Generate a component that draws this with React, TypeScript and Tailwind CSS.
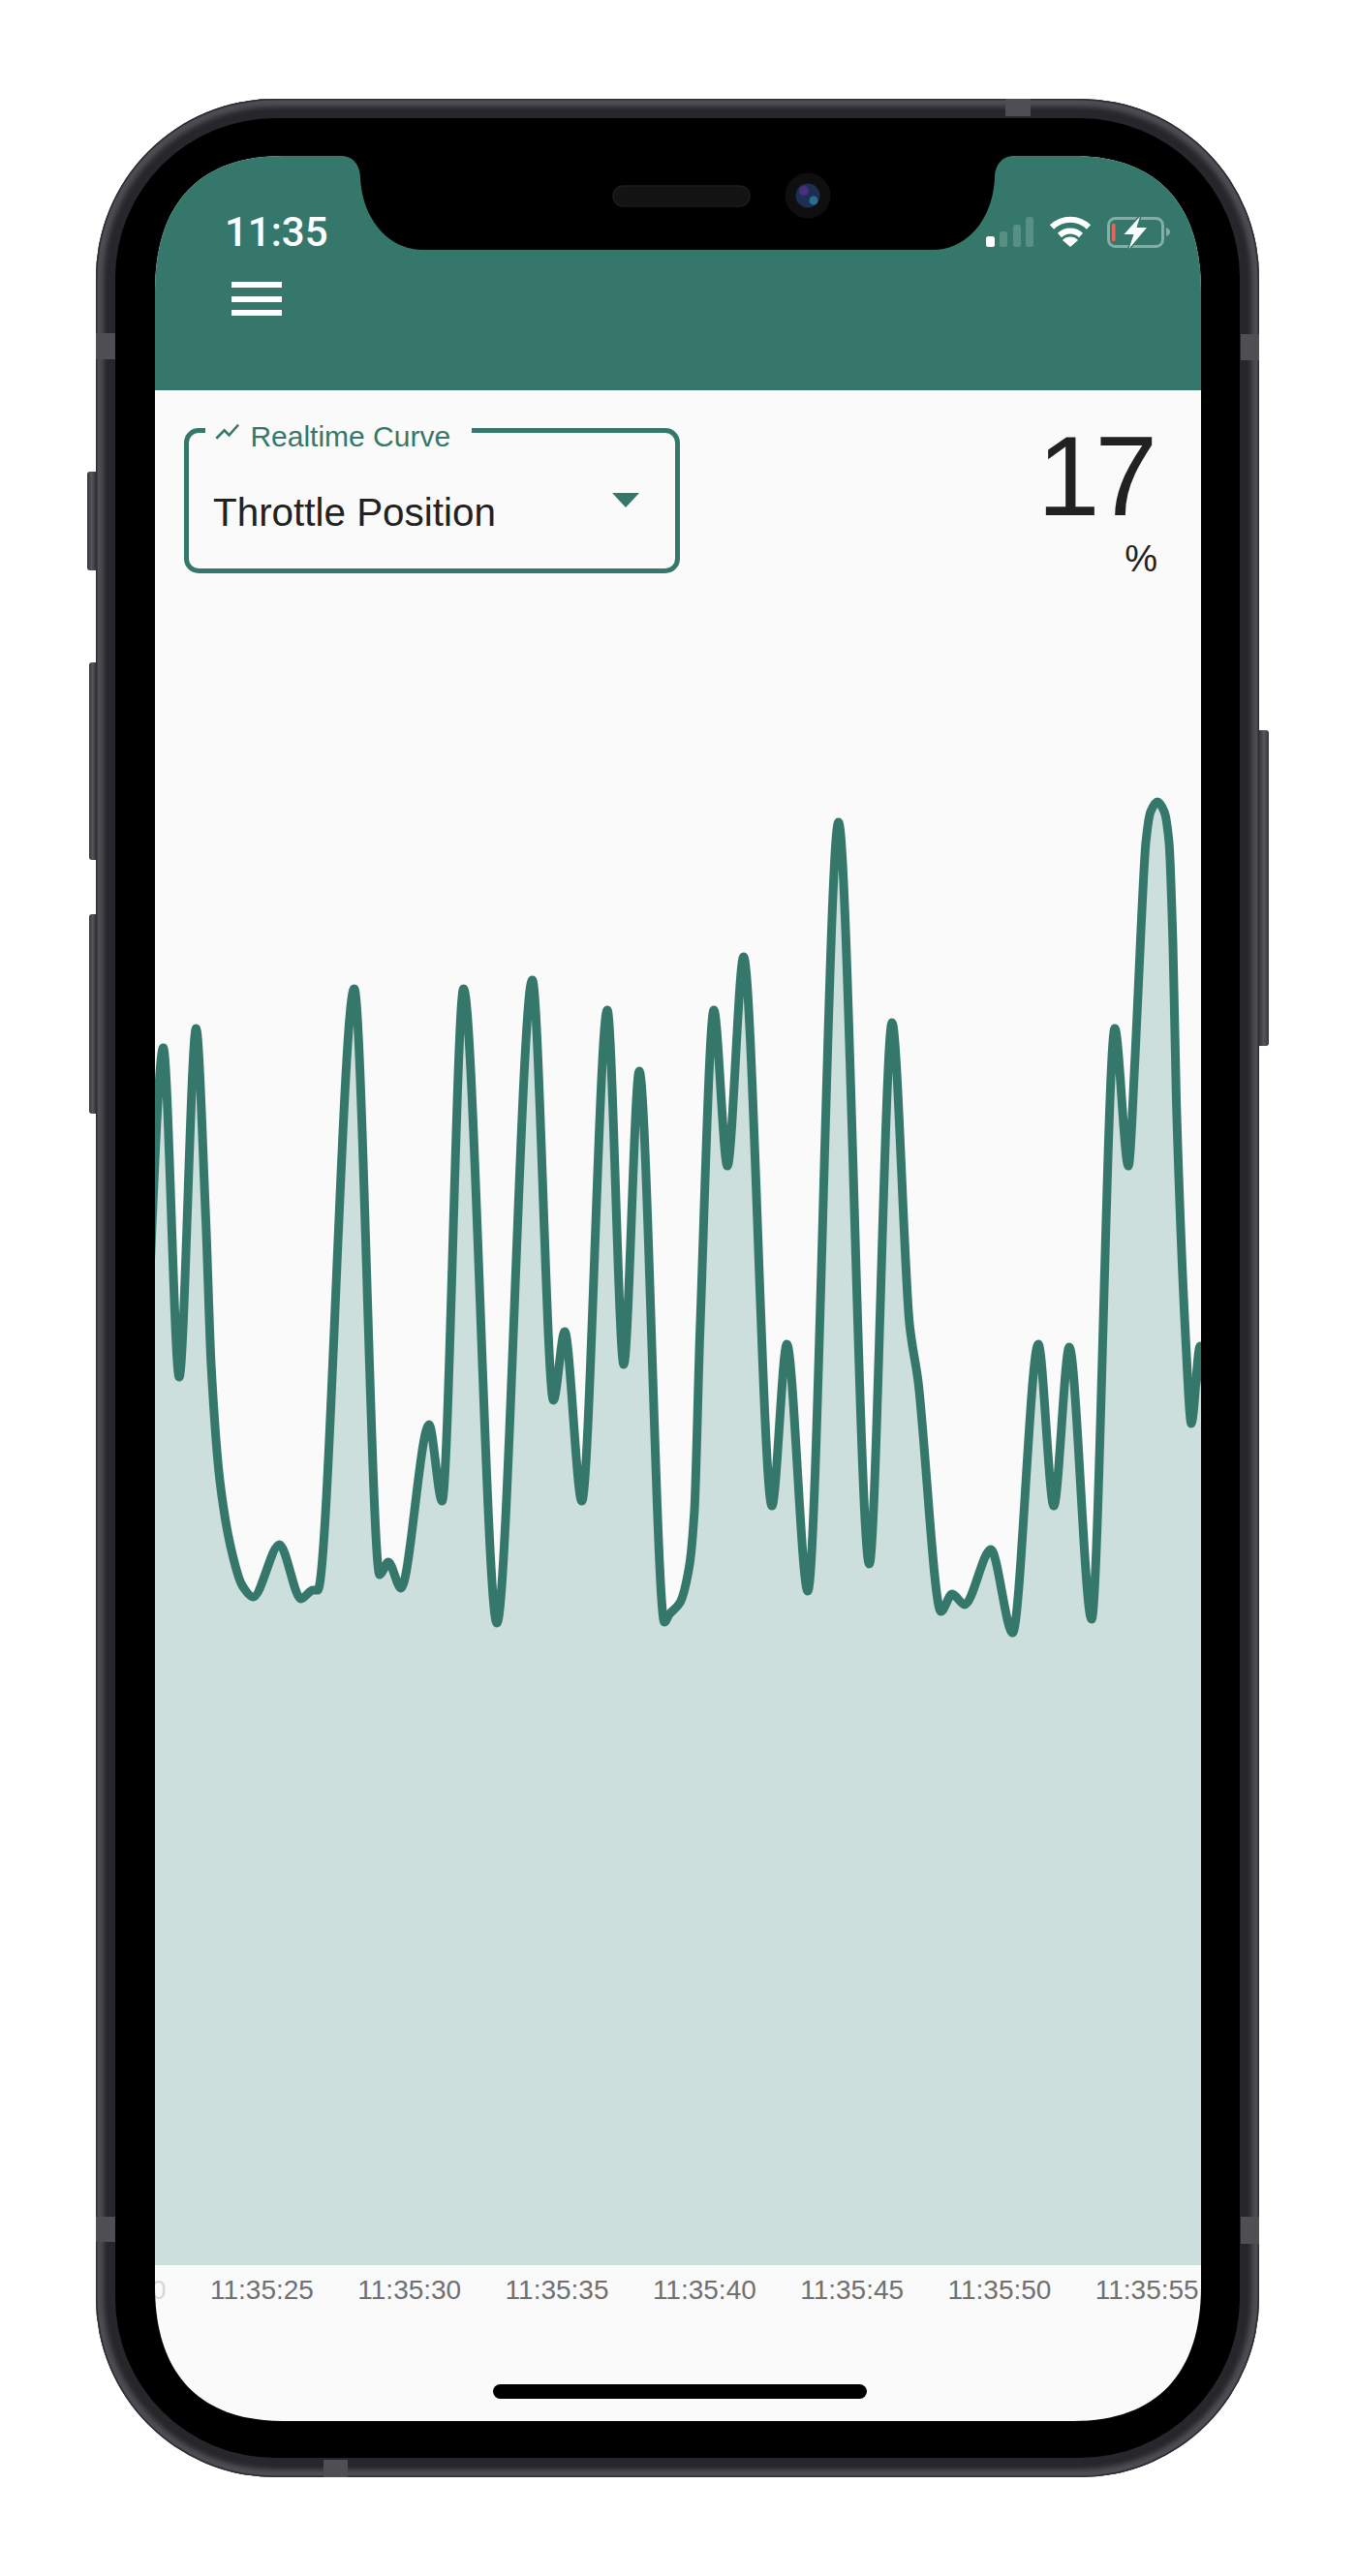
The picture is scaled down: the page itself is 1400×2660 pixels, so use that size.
// Realtime curve screen inside an iPhone frame.
// Chart points are in page pixels, the svg viewBox keeps the same coordinates.

const GREEN = '#35786b';

const CURVE: [number, number][] = [
  [150, 1420], [168.6, 1082], [185, 1422], [202.5, 1062], [212.5, 1260], [218, 1409], [227, 1529],
  [239, 1601], [250, 1637], [261.4, 1649], [288.6, 1595], [310.7, 1651], [323, 1642], [328, 1642],
  [365.7, 1021], [392, 1626], [401, 1613], [414, 1640], [443, 1471], [456.4, 1550], [478.6, 1021],
  [513, 1676], [549.6, 1012], [571.4, 1446], [583, 1375], [600.7, 1550], [627, 1043], [644, 1409],
  [660, 1106], [686, 1675], [691, 1667], [702, 1655], [711.4, 1619], [717, 1559], [722.5, 1380],
  [737, 1043], [751, 1204], [767.7, 988], [797, 1555], [812.4, 1388], [834, 1643], [865.7, 849],
  [897.5, 1615], [921, 1056], [939, 1367], [948, 1427], [971.5, 1664], [983, 1646], [996, 1657],
  [1023, 1600], [1045.5, 1686], [1072, 1388], [1088, 1555], [1104, 1391], [1127, 1672], [1151, 1062],
  [1165, 1204], [1172, 1090], [1178, 960], [1183, 870], [1188, 838], [1195, 828], [1202, 838], [1207, 870],
  [1211, 975], [1214.6, 1140], [1224, 1380], [1230, 1470], [1239, 1390], [1250, 1500],
];

// monotone cubic, horizontal tangent at every turning point
function smoothPath(pts: [number, number][], k = 0.3) {
  const slopes = pts.slice(1).map((p, i) => (p[1] - pts[i][1]) / (p[0] - pts[i][0]));
  const tangents = pts.map((_, i) => {
    if (i === 0) return slopes[0];
    if (i === pts.length - 1) return slopes[i - 1];
    const a = slopes[i - 1];
    const b = slopes[i];
    if (a * b <= 0) return 0;
    return (2 * a * b) / (a + b);
  });
  let d = `M${pts[0][0]} ${pts[0][1]}`;
  for (let i = 0; i < pts.length - 1; i++) {
    const [x0, y0] = pts[i];
    const [x1, y1] = pts[i + 1];
    const dx = (x1 - x0) * k;
    d += ` C${(x0 + dx).toFixed(1)} ${(y0 + tangents[i] * dx).toFixed(1)} ${(x1 - dx).toFixed(1)} ${(y1 - tangents[i + 1] * dx).toFixed(1)} ${x1} ${y1}`;
  }
  return d;
}

const LINE = smoothPath(CURVE);
const AREA = `${LINE} L1250 2339 L150 2339 Z`;

const TICKS = ['11:35:25', '11:35:30', '11:35:35', '11:35:40', '11:35:45', '11:35:50', '11:35:55'];

function StatusIcons() {
  return (
    <svg width="190" height="34" viewBox="1018 223 190 34" fill="none">
      <rect x="1018" y="244" width="9" height="11" rx="2.5" fill="#fff" />
      <rect x="1032" y="239" width="8" height="16" rx="2.5" fill="#fff" fillOpacity="0.18" />
      <rect x="1046" y="232" width="8" height="23" rx="2.5" fill="#fff" fillOpacity="0.18" />
      <rect x="1059" y="224" width="8" height="31" rx="2.5" fill="#fff" fillOpacity="0.18" />
      <path d="M1086 234.5 A27 27 0 0 1 1124 234.5" stroke="#fff" strokeWidth="6" />
      <path d="M1094 243 A16 16 0 0 1 1116 243" stroke="#fff" strokeWidth="6" />
      <path d="M1105 255 L1097 248 A11 11 0 0 1 1113 248 Z" fill="#fff" />
      <rect x="1144.5" y="225.5" width="56" height="29" rx="7" stroke="#fff" strokeOpacity="0.4" strokeWidth="3" />
      <path d="M1204 235 C1207 236 1208 238 1208 239.5 C1208 241 1207 243 1204 244 Z" fill="#fff" fillOpacity="0.4" />
      <rect x="1148" y="231" width="3.5" height="18" rx="1" fill="#e5675a" />
      <path
        d="M1177 223.5 L1160.5 242 L1170.5 242 L1165.5 257 L1184 235 L1173.5 235 Z"
        fill="#fff"
        stroke={GREEN}
        strokeWidth="3"
        paintOrder="stroke"
      />
    </svg>
  );
}

function Notch() {
  return (
    <svg className="absolute top-0 left-[180px]" width="720" height="100" viewBox="340 161 720 100">
      <path
        d="M352 161 C365 161 372 171 372 184 C374 225 400 258 437 258 L963 258 C1000 258 1025 225 1027 184 C1027 171 1034 161 1047 161 Z"
        fill="#000"
      />
      <rect x="633" y="192" width="141" height="21" rx="10.5" fill="#131313" stroke="#1d1d1d" strokeWidth="1.5" />
      <circle cx="834" cy="202" r="23.5" fill="#0f0f10" />
      <circle cx="834" cy="202" r="12.5" fill="#1c2f52" />
      <circle cx="830" cy="197" r="5" fill="#4b2f7e" />
      <circle cx="840" cy="207" r="4.5" fill="#2c6d8f" />
    </svg>
  );
}

function SelectBox() {
  return (
    <div className="relative w-[512px] h-[150px] rounded-[15px] border-[5px] border-[#35786b] pt-[59px] pl-[25px] pr-[37px] flex justify-between items-start">
      <div className="absolute left-[17px] top-[-11px] w-[275px] h-[30px] bg-[#fafafa] pl-[8px] flex items-center text-[#35786b] text-[30px] leading-[30px]">
        <svg className="-translate-y-[5px]" width="29.4" height="29.4" viewBox="0 0 24 24" fill="#35786b">
          <path d="M3.5 18.49l6-6.01 4 4L22 6.92l-1.41-1.41-7.09 7.97-4-4L2 16.99z" />
        </svg>
        <span className="ml-[9px] whitespace-nowrap">Realtime Curve</span>
      </div>
      <span className="text-[40.4px] leading-[46px] text-[#212121] whitespace-nowrap">Throttle Position</span>
      <svg className="mt-[3px]" width="28" height="15" viewBox="0 0 28 15" fill="#35786b">
        <path d="M0 0 H28 L14 15 Z" />
      </svg>
    </div>
  );
}

function Screen() {
  return (
    <div className="relative w-[1080px] h-[2339px] overflow-hidden bg-[#fafafa] font-['Liberation_Sans',Arial,sans-serif] [clip-path:path('M0_139_C0_50_45_0_132_0_L948_0_C1035_0_1080_50_1080_139_L1080_2200_C1080_2289_1035_2339_948_2339_L132_2339_C45_2339_0_2289_0_2200_Z')]">
      <header className="h-[242px] bg-[#35786b] pt-[62px] pl-[72px] pr-[32px]">
        <div className="flex justify-between items-center h-[34px]">
          <span className="font-['Roboto',sans-serif] font-medium text-[42px] leading-[34px] text-white">11:35</span>
          <StatusIcons />
        </div>
        <div className="mt-[34px] ml-[7px] w-[52px] flex flex-col gap-[8.5px]">
          <div className="h-[6px] bg-white" />
          <div className="h-[6px] bg-white" />
          <div className="h-[6px] bg-white" />
        </div>
      </header>

      <div className="flex justify-between pt-[39px] pb-[3px] pl-[30px] pr-[45px]">
        <SelectBox />
        <div className="text-right text-[#212121]">
          <div className="mr-[5px] text-[116px] leading-[100px] tracking-[-5px]">17</div>
          <div className="mt-[15px] text-[38px] leading-[40px]">%</div>
        </div>
      </div>

      <svg className="block" width="1080" height="1739" viewBox="160 600 1080 1739">
        <path d={AREA} fill="#cddfdc" />
        <path d={LINE} fill="none" stroke={GREEN} strokeWidth="9" strokeLinejoin="round" />
      </svg>

      <div className="flex pt-[10px] ml-[-118px] text-[28px] leading-[32px] text-[#707070]">
        <span className="w-[152.3px] shrink-0 text-center opacity-25">11:35:20</span>
        {TICKS.map((t) => (
          <span key={t} className="w-[152.3px] shrink-0 text-center">
            {t}
          </span>
        ))}
      </div>

      <div className="absolute left-[349px] top-[2301px] w-[386px] h-[15px] rounded-full bg-black" />
      <Notch />
    </div>
  );
}

function SideButton({ className }: { className: string }) {
  return <div className={`absolute bg-gradient-to-r from-[#36363a] via-[#55555b] to-[#36363a] ${className}`} />;
}

function FrameBand({ className }: { className: string }) {
  return <div className={`absolute bg-[#4f4f53] ${className}`} />;
}

export default function App() {
  return (
    <div className="w-[1400px] h-[2660px] bg-white pt-[102px] pl-[99px]">
      <div className="relative w-[1201px] h-[2456px]">
        <SideButton className="left-[-9px] top-[385px] w-[9px] h-[102px] rounded-l-[3px]" />
        <SideButton className="left-[-7px] top-[582px] w-[7px] h-[204px] rounded-l-[3px]" />
        <SideButton className="left-[-7px] top-[842px] w-[7px] h-[206px] rounded-l-[3px]" />
        <SideButton className="right-[-10px] top-[652px] w-[10px] h-[326px] rounded-r-[3px]" />

        <div className="w-full h-full rounded-[185px] p-[20px] bg-[#27272b] shadow-[inset_0_0_0_1.5px_#2e2e32,inset_0_0_5px_8px_#4e4e54]">
          <div className="w-full h-full rounded-[165px] bg-black pt-[39px] pl-[41px]">
            <Screen />
          </div>
        </div>

        <FrameBand className="left-0 top-[242px] w-[20px] h-[27px]" />
        <FrameBand className="left-0 top-[2187px] w-[20px] h-[26px]" />
        <FrameBand className="right-0 top-[243px] w-[19px] h-[27px]" />
        <FrameBand className="right-0 top-[2187px] w-[19px] h-[28px]" />
        <FrameBand className="left-[939px] top-0 w-[26px] h-[18px]" />
        <FrameBand className="left-[235px] bottom-0 w-[25px] h-[18px]" />
      </div>
    </div>
  );
}
